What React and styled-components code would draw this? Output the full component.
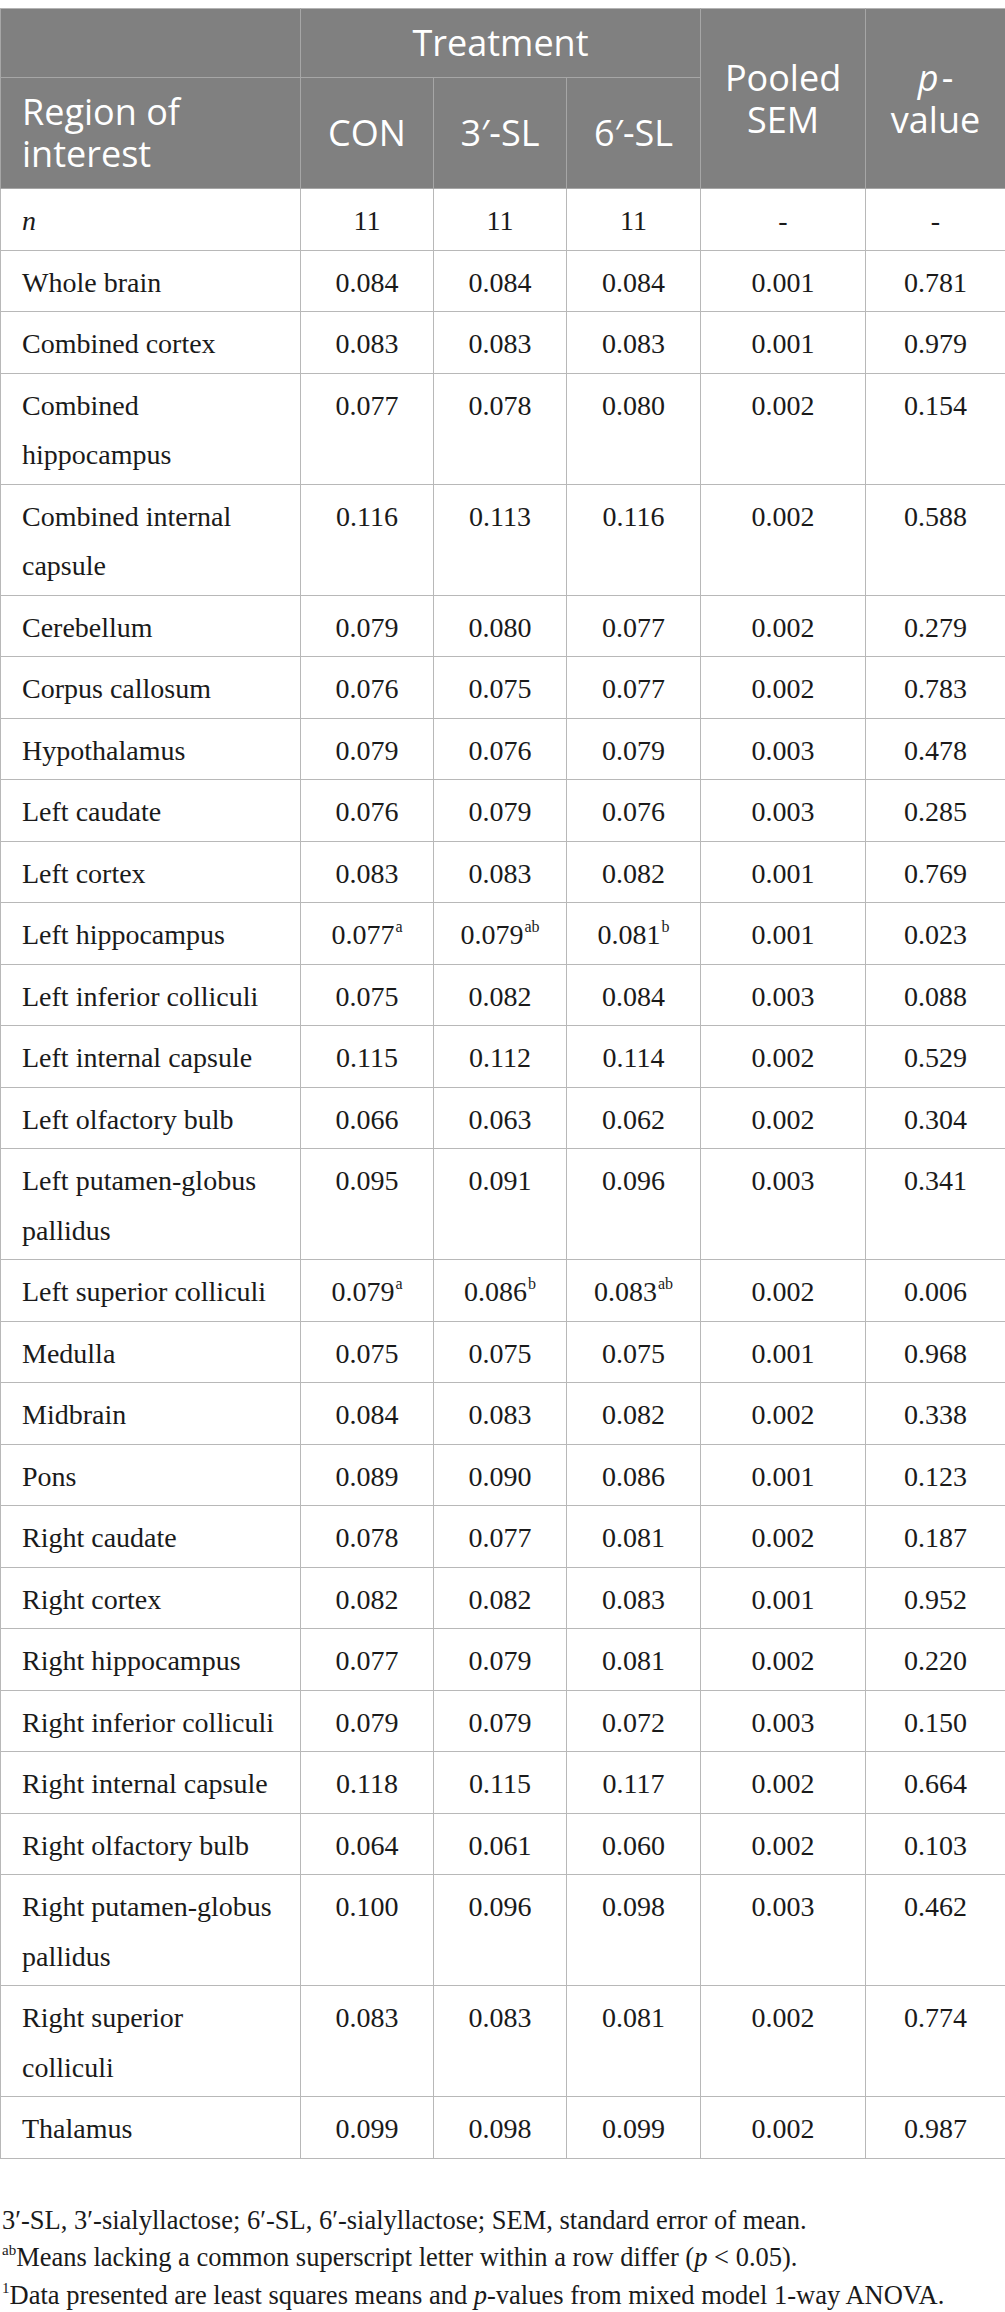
import React from 'react';
import styled, { createGlobalStyle, css } from 'styled-components';

const GlobalStyle = createGlobalStyle`
  html, body {
    margin: 0;
    padding: 0;
    background: #ffffff;
  }
`;

const Page = styled.div`
  width: 1005px;
  padding-top: 8px;
  color: #1a1a1a;
  font-family: 'Liberation Serif', 'Times New Roman', serif;
`;

const DataTable = styled.table`
  width: 1005px;
  border-collapse: collapse;
  table-layout: fixed;
`;

const HeadCell = styled.th`
  background-color: #808080;
  color: #ffffff;
  font-family: 'Open Sans', 'Noto Sans', sans-serif;
  font-weight: 400;
  font-size: 36px;
  line-height: 42px;
  padding: 13px 10px 13px ${props => (props.$left ? '21px' : '10px')};
  text-align: ${props => (props.$left ? 'left' : 'center')};
  vertical-align: middle;
  border: 1px solid #a6a6a6;
  border-top-color: #b3b3b3;

  /* the "p" of p-value is set in italics */
  ${props =>
    props.$italicFirst &&
    css`
      &::first-letter {
        font-style: italic;
        padding-right: 3px;
      }
    `}
`;

const Row = styled.tr``;

const Cell = styled.td`
  font-size: 28px;
  line-height: 49.5px;
  padding: ${props => (props.$label ? '7px 22px 4px 21px' : '7px 4px 4px 4px')};
  text-align: ${props => (props.$label ? 'left' : 'center')};
  vertical-align: top;
  border: 1px solid #b8b8b8;
`;

const Sup = styled.sup`
  font-size: 16px;
  line-height: 0;
  vertical-align: 0;
  position: relative;
  top: -12px;
  margin-left: 1px;
`;

const Italic = styled.i`
  font-style: italic;
`;

const Notes = styled.div`
  margin-top: 43px;
  padding-left: 2px;
  font-size: 26.5px;
  line-height: 37.5px;
`;

const Note = styled.p`
  margin: 0;
`;

const NoteMark = styled.sup`
  font-size: 15px;
  line-height: 0;
  vertical-align: 0;
  position: relative;
  top: -11px;
`;

const rows = [
  ['Whole brain', '0.084', '0.084', '0.084', '0.001', '0.781'],
  ['Combined cortex', '0.083', '0.083', '0.083', '0.001', '0.979'],
  ['Combined hippocampus', '0.077', '0.078', '0.080', '0.002', '0.154'],
  ['Combined internal capsule', '0.116', '0.113', '0.116', '0.002', '0.588'],
  ['Cerebellum', '0.079', '0.080', '0.077', '0.002', '0.279'],
  ['Corpus callosum', '0.076', '0.075', '0.077', '0.002', '0.783'],
  ['Hypothalamus', '0.079', '0.076', '0.079', '0.003', '0.478'],
  ['Left caudate', '0.076', '0.079', '0.076', '0.003', '0.285'],
  ['Left cortex', '0.083', '0.083', '0.082', '0.001', '0.769'],
  ['Left hippocampus', ['0.077', 'a'], ['0.079', 'ab'], ['0.081', 'b'], '0.001', '0.023'],
  ['Left inferior colliculi', '0.075', '0.082', '0.084', '0.003', '0.088'],
  ['Left internal capsule', '0.115', '0.112', '0.114', '0.002', '0.529'],
  ['Left olfactory bulb', '0.066', '0.063', '0.062', '0.002', '0.304'],
  ['Left putamen-globus pallidus', '0.095', '0.091', '0.096', '0.003', '0.341'],
  ['Left superior colliculi', ['0.079', 'a'], ['0.086', 'b'], ['0.083', 'ab'], '0.002', '0.006'],
  ['Medulla', '0.075', '0.075', '0.075', '0.001', '0.968'],
  ['Midbrain', '0.084', '0.083', '0.082', '0.002', '0.338'],
  ['Pons', '0.089', '0.090', '0.086', '0.001', '0.123'],
  ['Right caudate', '0.078', '0.077', '0.081', '0.002', '0.187'],
  ['Right cortex', '0.082', '0.082', '0.083', '0.001', '0.952'],
  ['Right hippocampus', '0.077', '0.079', '0.081', '0.002', '0.220'],
  ['Right inferior colliculi', '0.079', '0.079', '0.072', '0.003', '0.150'],
  ['Right internal capsule', '0.118', '0.115', '0.117', '0.002', '0.664'],
  ['Right olfactory bulb', '0.064', '0.061', '0.060', '0.002', '0.103'],
  ['Right putamen-globus pallidus', '0.100', '0.096', '0.098', '0.003', '0.462'],
  ['Right superior colliculi', '0.083', '0.083', '0.081', '0.002', '0.774'],
  ['Thalamus', '0.099', '0.098', '0.099', '0.002', '0.987'],
];

function Value({ v }) {
  if (Array.isArray(v)) {
    return (
      <>
        {v[0]}
        <Sup>{v[1]}</Sup>
      </>
    );
  }
  return v;
}

export default function App() {
  return (
    <Page>
      <GlobalStyle />
      <DataTable>
        <colgroup>
          <col style={{ width: 300 }} />
          <col style={{ width: 133 }} />
          <col style={{ width: 133 }} />
          <col style={{ width: 134 }} />
          <col style={{ width: 165 }} />
          <col style={{ width: 140 }} />
        </colgroup>
        <thead>
          <tr>
            <HeadCell />
            <HeadCell colSpan={3}>Treatment</HeadCell>
            <HeadCell rowSpan={2}>Pooled SEM</HeadCell>
            <HeadCell rowSpan={2} $italicFirst>
              p-value
            </HeadCell>
          </tr>
          <tr>
            <HeadCell $left>Region of interest</HeadCell>
            <HeadCell>CON</HeadCell>
            <HeadCell>3′-SL</HeadCell>
            <HeadCell>6′-SL</HeadCell>
          </tr>
        </thead>
        <tbody>
          <Row>
            <Cell $label>
              <Italic>n</Italic>
            </Cell>
            <Cell>11</Cell>
            <Cell>11</Cell>
            <Cell>11</Cell>
            <Cell>-</Cell>
            <Cell>-</Cell>
          </Row>
          {rows.map(r => (
            <Row key={r[0]}>
              <Cell $label>{r[0]}</Cell>
              {r.slice(1).map((v, i) => (
                <Cell key={i}>
                  <Value v={v} />
                </Cell>
              ))}
            </Row>
          ))}
        </tbody>
      </DataTable>
      <Notes>
        <Note>3′-SL, 3′-sialyllactose; 6′-SL, 6′-sialyllactose; SEM, standard error of mean.</Note>
        <Note>
          <NoteMark>ab</NoteMark>Means lacking a common superscript letter within a row differ (<Italic>p</Italic> &lt; 0.05).
        </Note>
        <Note>
          <NoteMark>1</NoteMark>Data presented are least squares means and <Italic>p</Italic>-values from mixed model 1-way ANOVA.
        </Note>
      </Notes>
    </Page>
  );
}
